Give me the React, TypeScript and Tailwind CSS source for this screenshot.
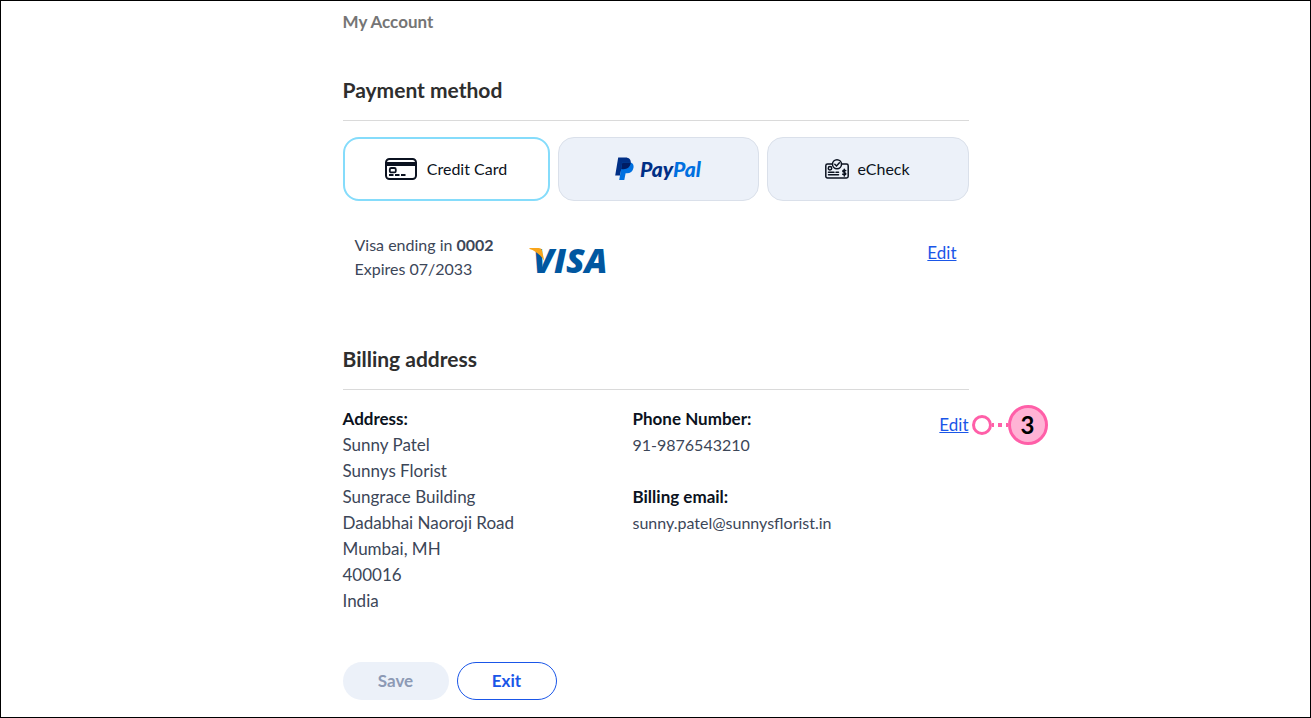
import React from 'react';

const addressLines = [
  'Sunny Patel',
  'Sunnys Florist',
  'Sungrace Building',
  'Dadabhai Naoroji Road',
  'Mumbai, MH',
  '400016',
  'India',
];

function CreditCardIcon() {
  return (
    <svg width="32" height="22" viewBox="0 0 32 22" fill="none" aria-hidden="true">
      <rect x="1" y="1" width="30" height="20" rx="3.5" stroke="#0b1220" strokeWidth="2" />
      <path d="M1 4h30v4H1z" fill="#0b1220" />
      <rect x="4.8" y="10" width="6" height="4.4" rx="1.4" stroke="#0b1220" strokeWidth="1.8" />
      <path d="M4 17h4.500M10 17h4.500M16 17h4.500" stroke="#0b1220" strokeWidth="1.8" />
    </svg>
  );
}

function PayPalIcon() {
  return (
    <svg width="19" height="24" viewBox="0 0 19 24" aria-hidden="true">
      <path d="M3.200 0.500H10.500C14 0.500 16.200 2.700 15.700 6C15 10.300 12.200 12.200 8.600 12.200H6.300L5.100 18.500H0.200Z" fill="#002f86" />
      <path d="M7.300 5.500H15.800C18 6.400 19 8.300 18.500 10.800C17.800 14.500 15.200 16.300 12 16.300H10.600L9.300 23H4.200Z" fill="#0070e0" />
      <path d="M7.300 5.500H15.750V6C15 10.300 12.200 12.200 8.600 12.200H6.150Z" fill="#001c64" />
    </svg>
  );
}

function ECheckIcon() {
  return (
    <svg width="24" height="20" viewBox="0 0 24 20" fill="none" stroke="#0b1220" strokeWidth="1.5" strokeLinecap="round" aria-hidden="true">
      <path d="M7 5H2.500A1.700 1.700 0 0 0 0.800 6.700V17.300A1.700 1.700 0 0 0 2.500 19H21.500A1.700 1.700 0 0 0 23.200 17.300V6.700A1.700 1.700 0 0 0 21.500 5H17" />
      <circle cx="12" cy="5.300" r="4.500" />
      <path d="M9.800 5.300L11.500 7L14.400 3.800" />
      <circle cx="5" cy="9.300" r="1.700" />
      <path d="M3.500 13.200H9M11 13.200H13.500M3.500 15.800H13.500" />
      <path d="M20.700 11.600C19.800 10.900 17.800 10.900 17.800 12.200S20.800 13.300 20.800 14.700S18.700 16 17.700 15.200M19.300 10.200V16.900" />
    </svg>
  );
}

function VisaLogo() {
  return (
    <svg width="84" height="28" viewBox="0 0 84 28" className="overflow-visible" role="img" aria-label="Visa">
      <text x="4" y="26" fill="#0157a0" fontFamily="'Open Sans', sans-serif" fontSize="34" fontWeight="800" fontStyle="italic">
        VISA
      </text>
      <path d="M0.500 1H9.500C11.800 1 12.800 2 13.200 4L15.300 14C12 8.500 6.500 3.500 0.500 2Z" fill="#f9a51a" />
    </svg>
  );
}

function StepMarker() {
  return (
    <div className="absolute left-full top-1/2 ml-[3px] flex -translate-y-1/2 items-center">
      <span className="size-5 rounded-full border-3 border-[#ff5fa8] bg-white" />
      <svg width="16" height="4" viewBox="0 0 16 4" fill="#ff5fa8" aria-hidden="true">
        <path d="M0 0h2v4H0zM6 0h4v4H6zM14 0h2v4h-2z" />
      </svg>
      <span className="flex size-10 items-center justify-center rounded-full border-3 border-[#ff5fa8] bg-[#ffb3d5] text-2xl font-bold text-black">
        3
      </span>
    </div>
  );
}

function SectionHeading({ children }: { children: React.ReactNode }) {
  return (
    <h2 className="border-b border-[#dadada] pb-4 text-[21px] leading-7 font-bold text-[#2e2e2e]">
      {children}
    </h2>
  );
}

export default function App() {
  return (
    <div className="min-h-screen border border-black bg-white font-['Lato',sans-serif] text-base text-[#3c4658]">
      <main className="mx-auto max-w-[626px] pt-[9px] pb-3">
        <p className="text-[17px] leading-6 font-bold text-[#757575]">My Account</p>

        <section className="mt-[42px]">
          <SectionHeading>Payment method</SectionHeading>
          <div className="mt-4 grid grid-cols-[207fr_201fr_202fr] gap-2 text-[#0b1220]">
            <button className="flex h-16 items-center justify-center gap-2.5 rounded-2xl border-2 border-[#85dcfb] bg-white">
              <CreditCardIcon />
              Credit Card
            </button>
            <button className="flex h-16 items-center justify-center gap-1.5 rounded-2xl border border-[#dae0ea] bg-[#ecf1f9]">
              <PayPalIcon />
              <span className="text-[21px] font-black text-[#002f86] italic">
                Pay<span className="text-[#0070e0]">Pal</span>
              </span>
            </button>
            <button className="flex h-16 items-center justify-center gap-2 rounded-2xl border border-[#dae0ea] bg-[#ecf1f9]">
              <ECheckIcon />
              eCheck
            </button>
          </div>
          <div className="flex items-start px-3 pt-8">
            <p className="w-[174px] leading-6">
              Visa ending in <strong>0002</strong>
              <br />
              Expires 07/2033
            </p>
            <div className="pt-3.5">
              <VisaLogo />
            </div>
            <a href="#payment" className="mt-2 ml-auto text-[17px] leading-6 text-[#1a56e8] underline">
              Edit
            </a>
          </div>
        </section>

        <section className="mt-16">
          <SectionHeading>Billing address</SectionHeading>
          <div className="mt-4 flex items-start leading-[26px]">
            <div className="w-[290px] text-[17px]">
              <h3 className="font-bold text-[#0b1220]">Address:</h3>
              {addressLines.map((line) => (
                <p key={line}>{line}</p>
              ))}
            </div>
            <div>
              <h3 className="text-[17px] font-bold text-[#0b1220]">Phone Number:</h3>
              <p>91-9876543210</p>
              <h3 className="mt-[26px] text-[17px] font-bold text-[#0b1220]">Billing email:</h3>
              <p>sunny.patel@sunnysflorist.in</p>
            </div>
            <div className="relative mt-1.5 ml-auto">
              <a href="#billing" className="text-[17px] text-[#1a56e8] underline">
                Edit
              </a>
              <StepMarker />
            </div>
          </div>
        </section>

        <div className="mt-12 flex gap-2 text-[17px]">
          <button className="h-[38px] w-[106px] rounded-full bg-[#ecf1f9] font-bold text-[#8d9ab5]" disabled>
            Save
          </button>
          <button className="h-[38px] w-[100px] rounded-full border border-[#1a56e8] font-bold text-[#1a56e8]">
            Exit
          </button>
        </div>
      </main>
    </div>
  );
}
